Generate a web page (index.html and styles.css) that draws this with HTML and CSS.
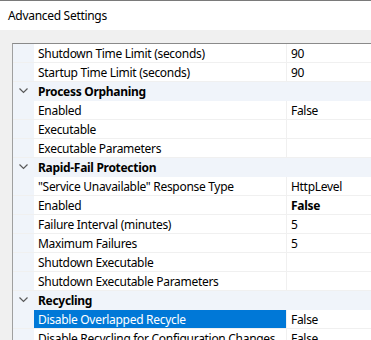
FILE: index.html
```html
<!DOCTYPE html>
<html>
<head>
<meta charset="utf-8">
<link rel="stylesheet" href="styles.css">
</head>
<body>
<div class="titlebar">Advanced Settings</div>
<div class="panel">
  <div class="grid">
    <div class="row"><div class="gutter"></div><div class="name">Shutdown Time Limit (seconds)</div><div class="value">90</div></div>
    <div class="row"><div class="gutter"></div><div class="name">Startup Time Limit (seconds)</div><div class="value">90</div></div>
    <div class="row cat"><div class="gutter"><svg class="chev" width="9" height="6" viewBox="0 0 9 6"><path d="M0.5 0.5 L4.5 4.5 L8.5 0.5" fill="none" stroke="#5a5a5a" stroke-width="1.2"/></svg></div><div class="name">Process Orphaning</div><div class="value"></div></div>
    <div class="row"><div class="gutter"></div><div class="name">Enabled</div><div class="value">False</div></div>
    <div class="row"><div class="gutter"></div><div class="name">Executable</div><div class="value"></div></div>
    <div class="row"><div class="gutter"></div><div class="name">Executable Parameters</div><div class="value"></div></div>
    <div class="row cat"><div class="gutter"><svg class="chev" width="9" height="6" viewBox="0 0 9 6"><path d="M0.5 0.5 L4.5 4.5 L8.5 0.5" fill="none" stroke="#5a5a5a" stroke-width="1.2"/></svg></div><div class="name">Rapid-Fail Protection</div><div class="value"></div></div>
    <div class="row"><div class="gutter"></div><div class="name">"Service Unavailable" Response Type</div><div class="value">HttpLevel</div></div>
    <div class="row"><div class="gutter"></div><div class="name">Enabled</div><div class="value bold">False</div></div>
    <div class="row"><div class="gutter"></div><div class="name">Failure Interval (minutes)</div><div class="value">5</div></div>
    <div class="row"><div class="gutter"></div><div class="name">Maximum Failures</div><div class="value">5</div></div>
    <div class="row"><div class="gutter"></div><div class="name">Shutdown Executable</div><div class="value"></div></div>
    <div class="row"><div class="gutter"></div><div class="name">Shutdown Executable Parameters</div><div class="value"></div></div>
    <div class="row cat"><div class="gutter"><svg class="chev" width="9" height="6" viewBox="0 0 9 6"><path d="M0.5 0.5 L4.5 4.5 L8.5 0.5" fill="none" stroke="#5a5a5a" stroke-width="1.2"/></svg></div><div class="name">Recycling</div><div class="value"></div></div>
    <div class="row selected"><div class="gutter"></div><div class="name">Disable Overlapped Recycle</div><div class="value">False</div></div>
    <div class="row"><div class="gutter"></div><div class="name">Disable Recycling for Configuration Changes</div><div class="value">False</div></div>
  </div>
</div>
</body>
</html>
```
FILE: styles.css
```css
html, body {
  margin: 0;
  padding: 0;
}
body {
  background: #f0f0f0;
  font-family: "Noto Sans", "Open Sans", sans-serif;
  font-size: 12px;
  letter-spacing: -0.3px;
  color: #000;
  overflow: hidden;
  height: 340px;
}
.titlebar {
  background: #fff;
  border-top: 1px solid #7a7a7a;
  height: 30px;
  line-height: 30px;
  padding-left: 8px;
  box-sizing: border-box;
}
.panel {
  padding: 13px 0 0 12px;
}
.grid {
  background: #fff;
  border-left: 1px solid #a0a0a0;
  border-top: 1px solid #8a8a8a;
}
.row {
  display: grid;
  grid-template-columns: 21px 253px 1fr;
  height: 19px;
  box-sizing: border-box;
  border-bottom: 1px solid #f0f0f0;
  line-height: 17px;
  white-space: nowrap;
}
.gutter {
  background: #f0f4fa;
  display: flex;
  align-items: center;
  justify-content: center;
}
.name {
  padding: 1px 0 0 4px;
  overflow: hidden;
  border-right: 1px solid #f0f0f0;
}
.value {
  padding: 1px 0 0 4px;
  overflow: hidden;
}
.bold {
  font-weight: bold;
}
.cat {
  background: #f0f4fa;
  border-bottom-color: #f0f4fa;
}
.cat .name {
  font-weight: bold;
  border-right-color: transparent;
}
.selected .name {
  background: #0078d7;
  color: #fff;
}
.chev {
  display: block;
}
```
